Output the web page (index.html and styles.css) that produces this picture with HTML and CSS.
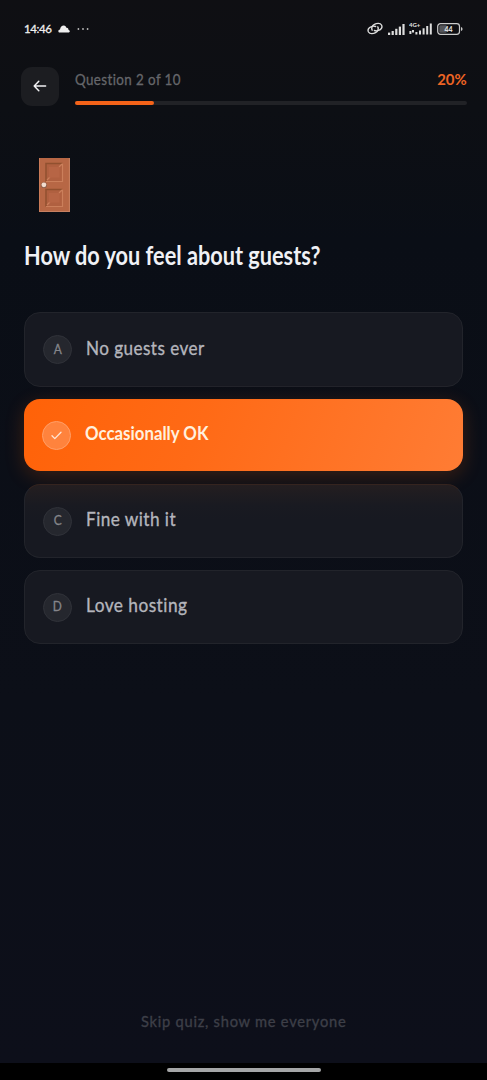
FILE: index.html
```html
<!DOCTYPE html>
<html lang="en">
<head>
<meta charset="utf-8">
<title>Roommate quiz</title>
<link rel="stylesheet" href="styles.css">
</head>
<body>
<div class="screen">
  <div class="status">
    <span class="time">14:46</span>
    <svg class="cloud" width="12" height="8" viewBox="0 0 12 8"><path d="M1.8 7.5C-.2 7.5-.1 4.8 2 4.6 2.4 1.8 3.8.5 5.8.5 7.4.5 8 1.7 8.4 2.8 10.3 2.7 10.3 4.2 10.6 5 12.3 5.4 12 7.5 10.8 7.5Z" fill="#eee"/></svg>
    <svg class="dots" width="12" height="4" viewBox="0 0 12 4" fill="#bbb"><circle cx="1.4" cy="2" r=".9"/><circle cx="6" cy="2" r=".9"/><circle cx="10.6" cy="2" r=".9"/></svg>
    <svg class="link" width="16" height="13" viewBox="0 0 16 13" fill="none" stroke="#ddd" stroke-width="1.4" stroke-linecap="round"><path d="M5.2 8.1C4.2 6.2 5 3.6 7.4 2.4 9.6 1.2 13.2.8 14.5 3 15.8 5.4 14 7.6 11.6 8.4 10 9 8.7 9 7.4 8.5"/><path d="M10.8 4.9C11.8 6.8 11 9.4 8.6 10.6 6.4 11.8 2.8 12.2 1.5 10 .2 7.6 2 5.4 4.4 4.6 6 4 7.3 4 8.6 4.5"/></svg>
    <svg class="signal" width="17" height="11" viewBox="0 0 17 11" fill="#ddd"><rect x="0" y="8.6" width="2.2" height="2.4"/><rect x="3.6" y="7" width="2.2" height="4"/><rect x="7.2" y="4.8" width="2.2" height="6.2"/><rect x="10.8" y="2.6" width="2.2" height="8.4"/><rect x="14.4" y="0" width="2.2" height="11"/></svg>
    <svg class="signal-4g" width="23" height="13" viewBox="0 0 23 13" fill="#ddd"><text x="0" y="4.8" class="tiny">4G+</text><path d="M.4 9h2v3h-2zM3 8h2v2.6H3zM6.4 10h2v2.5h-2zM10 8.4h2v4.1h-2zM13.6 6.2h2v6.3h-2zM17.2 4h2v8.5h-2zM20.8 1.5h2v11h-2z"/></svg>
    <svg class="battery" width="26" height="12" viewBox="0 0 26 12"><rect x=".7" y=".7" width="21.8" height="10.6" rx="2.8" fill="none" stroke="#ccc" stroke-width="1.2"/><rect x="2.3" y="2.3" width="7.5" height="7.4" rx="1.2" fill="#55565a"/><path d="M24 4q1.6.3 1.6 2T24 8z" fill="#ccc"/><text x="11.5" y="8.5" text-anchor="middle" class="charge">44</text></svg>
  </div>
  <header class="header">
    <button class="back" aria-label="Back"><svg width="14" height="12" viewBox="0 0 14 12" fill="none" stroke="#f1f1f3" stroke-width="1.5" stroke-linecap="round" stroke-linejoin="round"><path d="M12.6 6H1.2M5.8 1.2 1.2 6l4.6 4.8"/></svg></button>
    <div class="progress">
      <div class="progress-text"><span class="step">Question 2 of 10</span><span class="percent">20%</span></div>
      <div class="track"><div class="fill"></div></div>
    </div>
  </header>
  <main class="content">
    <svg class="door" width="31" height="54" viewBox="0 0 31 54">
      <rect width="31" height="54" rx=".6" fill="#b76745"/><path d="M.5 0v54" stroke="#c97a57"/><path d="M30.4 0v54M0 53.5h31" stroke="#c78061"/>
      <rect x="7" y="5.5" width="16.5" height="18" fill="#b06040"/><path d="M7 23.5v-18h16.5" fill="none" stroke="#91502f" stroke-width="1.5"/><path d="M7 23.5h16.5v-18M8 22l3-3M23 6l-3 3" fill="none" stroke="#cb7f5b" stroke-width="1.2"/><rect x="10" y="9" width="10.5" height="10.5" fill="#b76545"/>
      <rect x="7" y="31.5" width="16.5" height="17" fill="#b06040"/><path d="M7 48.5v-17h16.5" fill="none" stroke="#91502f" stroke-width="1.5"/><path d="M7 48.5h16.5v-17M8 47l3-3M23 32l-3 3" fill="none" stroke="#cb7f5b" stroke-width="1.2"/><rect x="10" y="35" width="10.5" height="9.5" fill="#b76545"/>
      <circle cx="5" cy="27.2" r="2.9" fill="#8b5f4d"/><circle cx="4.9" cy="26.8" r="2.4" fill="#f1ddd0"/>
    </svg>
    <h1 class="title"><span class="title-text">How do you feel about guests?</span></h1>
    <div class="options">
      <div class="option"><span class="badge"><span class="letter">A</span></span><span class="label label-a">No guests ever</span></div>
      <div class="option selected"><span class="badge"><svg width="11" height="9" viewBox="0 0 11 9" fill="none" stroke="#ffe6d5" stroke-width="1.3" stroke-linecap="round" stroke-linejoin="round"><path d="M1 4.8 3.8 7.6 10 1.2"/></svg></span><span class="label label-b">Occasionally OK</span></div>
      <div class="option after"><span class="badge"><span class="letter">C</span></span><span class="label label-c">Fine with it</span></div>
      <div class="option"><span class="badge"><span class="letter">D</span></span><span class="label label-d">Love hosting</span></div>
    </div>
  </main>
  <div class="skip"><span class="skip-text">Skip quiz, show me everyone</span></div>
  <div class="nav"><div class="handle"></div></div>
</div>
</body>
</html>
```
FILE: styles.css
```css
* { box-sizing: border-box; }
body { margin: 0; background: #0d0f15; font-family: Lato, "Open Sans", sans-serif; font-variant-ligatures: none; }
.screen { width: 487px; height: 1080px; display: flex; flex-direction: column; overflow: hidden; background: linear-gradient(180deg, #0f0f13 0, #0d0f14 110px, #0a0e16 240px, #0c0f18 700px, #0d0f1a 1063px); }
.status { height: 57px; padding: 0 24px; display: flex; align-items: center; flex: none; color: #eee; }
.time { width: 27px; font-size: 11.5px; letter-spacing: -.4px; white-space: nowrap; -webkit-text-stroke: .3px; }
.cloud { margin-left: 7px; }
.dots { margin-left: 7px; }
.link { margin-left: auto; }
.signal { margin: 2px 0 0 5px; }
.signal-4g { margin-left: 4px; }
.battery { margin-left: 5px; }
.tiny { font-size: 6px; font-weight: 900; }
.charge { font-size: 7px; font-weight: 900; fill: #ddd; }
.header { height: 49px; padding: 0 20px 0 21px; display: flex; align-items: flex-end; gap: 16px; flex: none; }
.back { width: 38px; height: 39px; padding: 0 0 2px; border: 0; border-radius: 11px; background: #1c1d21; display: grid; place-items: center; }
.progress { flex: 1; padding-bottom: 1px; }
.progress-text { display: flex; justify-content: space-between; height: 20px; line-height: 20px; margin-bottom: 12px; white-space: nowrap; }
.step { font-size: 15.5px; color: #66676b; letter-spacing: .5px; transform: scaleX(.86); transform-origin: left center; -webkit-text-stroke: .3px; }
.percent { font-size: 15.5px; font-weight: 700; color: #ee6424; transform: scaleX(.96); transform-origin: right center; }
.track { height: 4px; border-radius: 2px; background: #212226; }
.fill { width: 79px; height: 4px; border-radius: 2px; background: #f46319; }
.content { padding: 52px 24px 0; display: flex; flex-direction: column; }
.door { margin-left: 15px; display: block; }
.title { margin: 27px 0 0; height: 32px; line-height: 32px; font-size: 26px; font-weight: 700; color: #f0f1f5; white-space: nowrap; }
.title-text, .label, .skip-text { display: inline-block; transform-origin: left center; }
.title-text { transform: scaleX(.835); }
.options { margin-top: 41px; display: flex; flex-direction: column; gap: 12px; }
.option { height: 74px; padding: 0 18px; border: 1px solid #22242b; border-radius: 16px; background: #171921; display: flex; align-items: center; gap: 14px; color: #b4b5bc; }
.option:first-child { height: 75px; }
.badge { width: 29px; height: 29px; border: 1px solid #303239; border-radius: 50%; background: #25272e; display: grid; place-items: center; flex: none; }
.letter { color: #85868b; font-size: 14px; line-height: 16px; padding-bottom: 2px; transform: scaleX(.85); -webkit-text-stroke: .3px; }
.label { font-size: 19px; line-height: 24px; padding-bottom: 5px; letter-spacing: .5px; white-space: nowrap; -webkit-text-stroke: .35px; }
.label-a { transform: scaleX(.9); padding-bottom: 4px; }
.label-b { transform: scaleX(.885); }
.label-c { transform: scaleX(.905); }
.label-d { transform: scaleX(.91); }
.selected { height: 72px; border: 0; background: linear-gradient(110deg, #ff6208 0%, #ff6a16 40%, #ff7c34 100%); box-shadow: 0 5px 20px rgba(255,98,8,.2); color: #fff0de; position: relative; }
.selected .badge { background: #ff833d; border-color: #ff9f68; }
.selected .label { font-weight: 700; letter-spacing: 0; -webkit-text-stroke: 0; }
.after { margin-top: 1px; background: linear-gradient(#241e20 0, #191a21 20px, #171921 35px); border-top-color: #35241f; position: relative; }
.skip { margin-top: auto; height: 24px; line-height: 24px; text-align: center; font-size: 15.5px; color: #3d3f48; margin-bottom: 30px; }
.skip-text { letter-spacing: .8px; transform: scaleX(.945); transform-origin: center; -webkit-text-stroke: .35px; }
.nav { height: 17px; background: #000; display: flex; justify-content: center; padding-top: 5px; flex: none; }
.handle { width: 154px; height: 4px; border-radius: 2px; background: #a5a6a7; }
```
